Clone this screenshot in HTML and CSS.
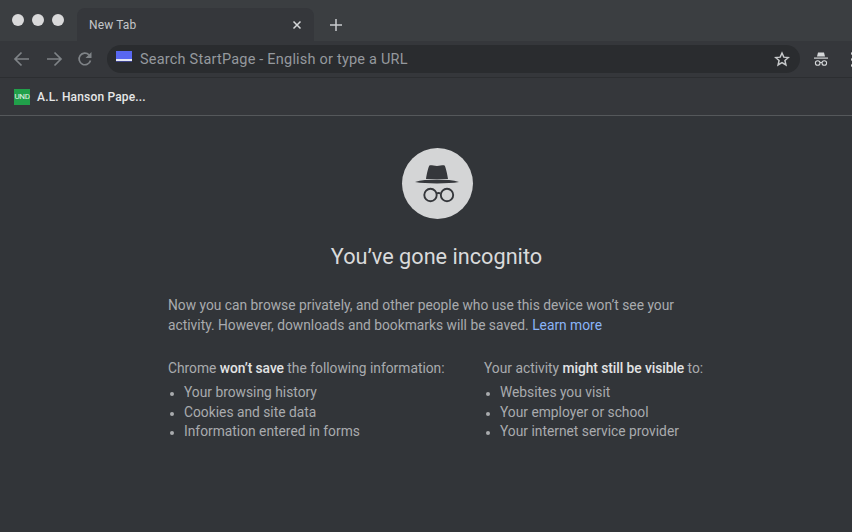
FILE: index.html
```html
<!DOCTYPE html>
<html lang="en">
<head>
<meta charset="utf-8">
<title>New Tab</title>
<link rel="stylesheet" href="styles.css">
</head>
<body>
<div class="window">
  <header class="tabstrip">
    <div class="lights"><i></i><i></i><i></i></div>
    <div class="tab">
      <span class="tab-title">New Tab</span>
      <svg class="tab-close" width="10" height="10" viewBox="0 0 10 10"><path d="M1.500 1.500l7 7M8.500 1.500l-7 7" stroke="#d5d7d9" stroke-width="1.500" fill="none"/></svg>
    </div>
    <svg class="newtab" width="14" height="14" viewBox="0 0 14 14"><path d="M7 1v12M1 7h12" stroke="#c9cbce" stroke-width="1.500" fill="none"/></svg>
  </header>
  <nav class="toolbar">
    <svg class="nav" width="18" height="16" viewBox="0 0 18 16"><path d="M16 8H2M8.500 1.500L2 8l6.500 6.500" stroke="#7f8387" stroke-width="1.700" fill="none"/></svg>
    <svg class="nav" width="18" height="16" viewBox="0 0 18 16"><path d="M2 8h14M9.500 1.500L16 8l-6.500 6.500" stroke="#7f8387" stroke-width="1.700" fill="none"/></svg>
    <svg class="nav" width="16" height="16" viewBox="0 0 16 16"><path d="M13.500 9.500A5.800 5.800 0 1 1 12 3.800" stroke="#7f8387" stroke-width="1.700" fill="none"/><path d="M14.500 1v6h-6z" fill="#7f8387"/></svg>
    <div class="omnibox">
      <span class="favicon"></span>
      <span class="omni-text">Search StartPage - English or type a URL</span>
      <svg class="star" width="16" height="16" viewBox="0 0 24 24"><path d="M12 3l2.700 6.200 6.800.6-5.100 4.500 1.500 6.700L12 17.500 6.100 21l1.500-6.700-5.100-4.500 6.800-.6z" stroke="#c8cacc" stroke-width="2.200" fill="none"/></svg>
    </div>
    <svg class="incog-small" width="16" height="16" viewBox="0 0 16 16">
      <path d="M5 1.500h6l1 4h-8z" fill="#d5d7d9"/><path d="M1 6.500h14v1.200H1z" fill="#d5d7d9"/>
      <circle cx="4.700" cy="12" r="2.300" stroke="#d5d7d9" stroke-width="1.100" fill="none"/><circle cx="11.300" cy="12" r="2.300" stroke="#d5d7d9" stroke-width="1.100" fill="none"/><path d="M7 11.500h2" stroke="#d5d7d9" stroke-width="1"/>
    </svg>
    <div class="menu-dots"><i></i><i></i><i></i></div>
  </nav>
  <div class="bookmarks">
    <span class="und">UND</span>
    <span class="bm-title">A.L. Hanson Pape...</span>
  </div>
  <main class="content">
    <div class="badge">
      <svg width="44" height="38" viewBox="0 0 44 38">
        <path d="M14.500 .5C16 0 19 1 22 1s6-1 7.500-.5c1 .5 3 9.500 3.500 13.500H11c.5-4 2.500-13 3.500-13.500z" fill="#35373b"/>
        <path d="M0 17c6-1.600 13-2.400 22-2.400s16 .8 22 2.400c-6 1-13 1.400-22 1.400S6 18 0 17z" fill="#35373b"/>
        <circle cx="15.500" cy="30" r="6.200" stroke="#35373b" stroke-width="1.900" fill="none"/>
        <circle cx="32" cy="30" r="6.200" stroke="#35373b" stroke-width="1.900" fill="none"/>
        <path d="M21.500 28.500c1.300-.7 2.700-.7 4 0" stroke="#35373b" stroke-width="1.900" fill="none"/>
      </svg>
    </div>
    <h1 class="title">You’ve gone incognito</h1>
    <div class="copy">
      <p class="intro">Now you can browse privately, and other people who use this device won’t see your activity. However, downloads and bookmarks will be saved. <a href="#" class="learn">Learn more</a></p>
      <div class="columns">
        <section class="col">
          <p class="col-head">Chrome <b>won’t save</b> the following information:</p>
          <ul>
            <li>Your browsing history</li>
            <li>Cookies and site data</li>
            <li>Information entered in forms</li>
          </ul>
        </section>
        <section class="col">
          <p class="col-head">Your activity <b>might still be visible</b> to:</p>
          <ul>
            <li>Websites you visit</li>
            <li>Your employer or school</li>
            <li>Your internet service provider</li>
          </ul>
        </section>
      </div>
    </div>
  </main>
</div>
</body>
</html>
```
FILE: styles.css
```css
* { box-sizing: border-box; }
html, body { margin: 0; height: 100%; overflow: hidden; background: #323539; }
body { font-family: Roboto, "Liberation Sans", sans-serif; }
.window { width: 852px; height: 532px; display: flex; flex-direction: column; overflow: hidden; }

.tabstrip { height: 41px; background: #3b3e41; display: flex; align-items: flex-end; padding-left: 12px; flex: none; }
.lights { display: flex; gap: 8px; align-self: flex-start; margin-top: 14px; width: 65px; }
.lights i { width: 12px; height: 12px; border-radius: 50%; background: #d9d9da; }
.tab { width: 237px; height: 33px; background: #35373b; border-radius: 8px 8px 0 0; display: flex; align-items: center; padding: 0 12px; justify-content: space-between; }
.tab-title { font-size: 12px; color: #c4c6c9; letter-spacing: .12px; }
.newtab { margin: 0 0 9px 15px; }

.toolbar { height: 37px; background: #35373b; display: flex; align-items: center; padding: 0 0 0 13px; flex: none; border-bottom: 1px solid #2c2e31; }
.nav { flex: none; margin-right: 14px; }
.omnibox { width: 693px; height: 28px; background: #2a2c2f; border-radius: 14px; display: flex; align-items: center; padding: 0 10px 0 9px; flex: none; }
.favicon { width: 16px; height: 11px; margin-top: -5px; background: linear-gradient(#5867f0 0 8px, #e4e6f5 8px 10px, #3d438a 10px); flex: none; }
.omni-text { font-size: 14.500px; color: #95999e; margin-left: 8px; flex: 1; letter-spacing: .21px; }
.incog-small { flex: none; margin-left: 13px; }
.menu-dots { display: flex; flex-direction: column; gap: 3px; margin-left: 22px; flex: none; }
.menu-dots i { width: 3px; height: 3px; border-radius: 50%; background: #d5d7d9; }

.bookmarks { height: 38px; background: #35373b; border-bottom: 1px solid #55585b; display: flex; align-items: center; padding-left: 14px; flex: none; }
.und { width: 16px; height: 16px; background: #21a04a; color: #e4f2e8; font-size: 8px; line-height: 16px; text-align: center; flex: none; letter-spacing: -.3px; }
.bm-title { font-size: 12px; font-weight: 500; color: #e6e7e8; margin-left: 7px; letter-spacing: .17px; }

.content { flex: 1; background: #323539; display: flex; flex-direction: column; align-items: center; padding: 32px 0 0 21px; }
.badge { width: 71px; height: 71px; margin-left: 1px; border-radius: 50%; background: #d4d5d6; display: flex; align-items: center; justify-content: center; }
.title { margin: 23px 0 0; font-size: 21.700px; line-height: 30px; font-weight: 400; color: #d9dadb; }
.copy { width: 516px; margin: 23px 21px 0 0; font-size: 13.800px; line-height: 20px; color: #a9abae; }
.intro { margin: 0; }
.learn { color: #8ab4f8; text-decoration: none; }
.columns { display: flex; margin-top: 23px; }
.col { width: 316px; flex: none; }
.col-head { margin: 0; }
.col-head b { font-weight: 500; color: #e2e3e4; letter-spacing: -.06px; }
ul { margin: 5px 0 0; padding: 0 0 0 16px; }
li { line-height: 19.500px; }
li::marker { font-size: 12px; }
```
